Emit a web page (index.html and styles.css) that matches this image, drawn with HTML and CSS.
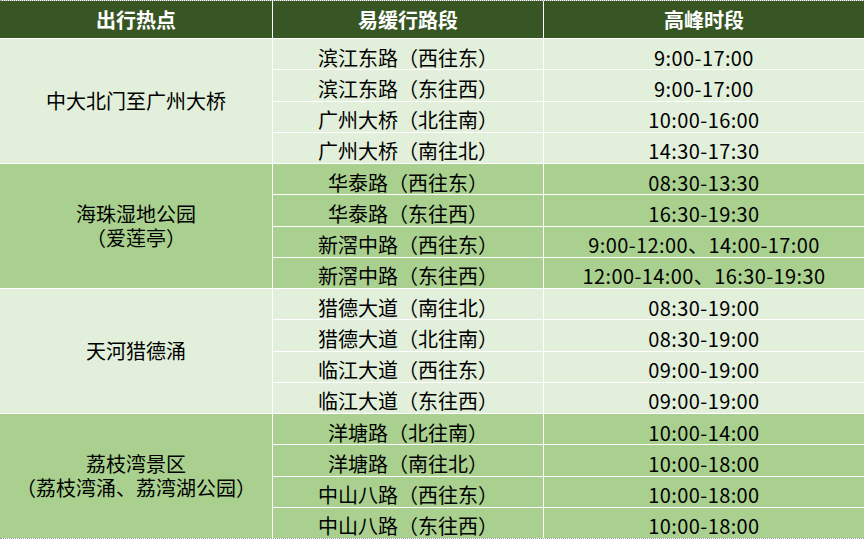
FILE: index.html
```html
<!DOCTYPE html>
<html lang="zh-CN">
<head>
<meta charset="utf-8">
<title>易缓行路段</title>
<link rel="stylesheet" href="styles.css">
</head>
<body>
<div class="sheet">
  <div class="grid">
    <div class="hd">出行热点</div>
    <div class="hd">易缓行路段</div>
    <div class="hd">高峰时段</div>

    <div class="spot light r1">中大北门至广州大桥</div>
    <div class="c light">滨江东路（西往东）</div><div class="c t light">9:00-17:00</div>
    <div class="c light">滨江东路（东往西）</div><div class="c t light">9:00-17:00</div>
    <div class="c light">广州大桥（北往南）</div><div class="c t light">10:00-16:00</div>
    <div class="c light">广州大桥（南往北）</div><div class="c t light">14:30-17:30</div>

    <div class="spot dark r2">海珠湿地公园<br>（爱莲亭）</div>
    <div class="c dark">华泰路（西往东）</div><div class="c t dark">08:30-13:30</div>
    <div class="c dark">华泰路（东往西）</div><div class="c t dark">16:30-19:30</div>
    <div class="c dark">新滘中路（西往东）</div><div class="c t dark">9:00-12:00、14:00-17:00</div>
    <div class="c dark">新滘中路（东往西）</div><div class="c t dark">12:00-14:00、16:30-19:30</div>

    <div class="spot light r3">天河猎德涌</div>
    <div class="c light">猎德大道（南往北）</div><div class="c t light">08:30-19:00</div>
    <div class="c light">猎德大道（北往南）</div><div class="c t light">08:30-19:00</div>
    <div class="c light">临江大道（西往东）</div><div class="c t light">09:00-19:00</div>
    <div class="c light">临江大道（东往西）</div><div class="c t light">09:00-19:00</div>

    <div class="spot dark r4">荔枝湾景区<br>（荔枝湾涌、荔湾湖公园）</div>
    <div class="c dark">洋塘路（北往南）</div><div class="c t dark">10:00-14:00</div>
    <div class="c dark">洋塘路（南往北）</div><div class="c t dark">10:00-18:00</div>
    <div class="c dark">中山八路（西往东）</div><div class="c t dark">10:00-18:00</div>
    <div class="c dark">中山八路（东往西）</div><div class="c t dark">10:00-18:00</div>
  </div>
</div>
</body>
</html>
```

FILE: styles.css
```css
html, body {
  margin: 0;
  padding: 0;
  background: #ffffff;
}

.sheet {
  width: 864px;
  height: 539px;
  border-top: 1px dotted #9a9a9a;
  border-bottom: 1px dotted #9a9a9a;
  box-sizing: border-box;
  font-family: "Noto Sans CJK SC", "Noto Sans", sans-serif;
  color: #000;
}

.grid {
  display: grid;
  grid-template-columns: 272px 270px 1fr;
  grid-template-rows: 37px repeat(16, 30.25px);
  gap: 1px;
  background: #ffffff;
}

.hd {
  background: #375623;
  color: #ffffff;
  font-weight: bold;
  font-size: 20px;
  display: flex;
  align-items: center;
  justify-content: center;
}

.c {
  display: flex;
  align-items: center;
  justify-content: center;
  font-size: 20px;
  padding-top: 7px;
  box-sizing: border-box;
  line-height: 20px;
}

.t {
  letter-spacing: 0.4px;
}

.spot {
  grid-column: 1;
  display: flex;
  align-items: center;
  justify-content: center;
  text-align: center;
  font-size: 20px;
  line-height: 24px;
}

.r1 { grid-row: 2 / span 4; }
.r2 { grid-row: 6 / span 4; }
.r3 { grid-row: 10 / span 4; }
.r4 { grid-row: 14 / span 4; }

.light { background: #e2efda; }
.dark { background: #a9d08e; }
```
